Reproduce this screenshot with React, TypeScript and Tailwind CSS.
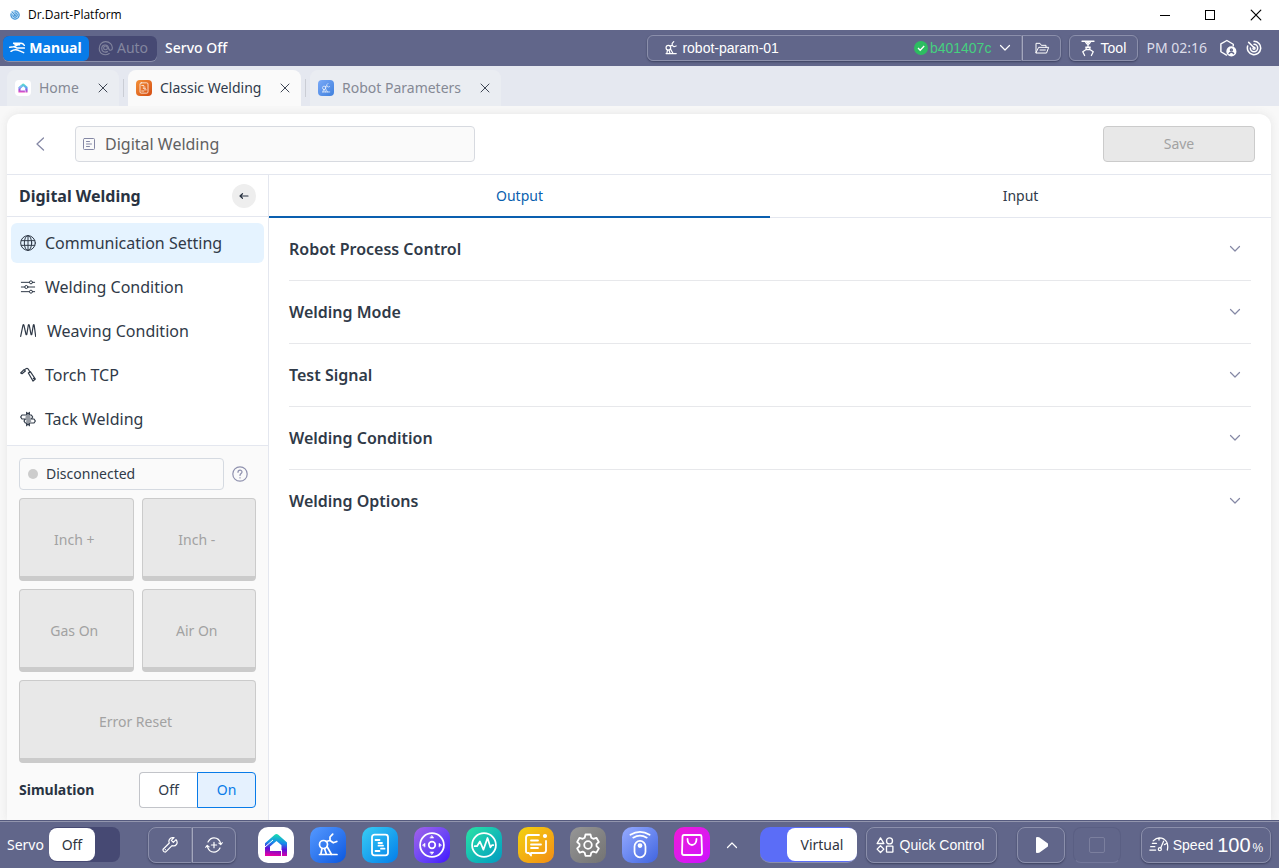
import { ReactNode, SVGProps, useState } from 'react';
import clsx from 'clsx';

type IconProps = SVGProps<SVGSVGElement>;

function Icon({ children, ...props }: IconProps) {
  return (
    <svg
      viewBox="0 0 24 24"
      fill="none"
      stroke="currentColor"
      strokeWidth={1.5}
      strokeLinecap="round"
      strokeLinejoin="round"
      aria-hidden="true"
      {...props}
    >
      {children}
    </svg>
  );
}

function RobotIcon(props: IconProps) {
  return (
    <Icon {...props}>
      <circle cx="7.500" cy="11.500" r="4" />
      <path d="M3.500 21.500h17.500M6 15.500l-1.200 6M11 13.500l4.500 8M8.500 15.500l2 6M10 8.500L14 7.500V4l2.700-2.800M14 7.500l3.300 2.300 3.500-1.300" />
    </Icon>
  );
}

function SpiralIcon(props: IconProps) {
  return (
    <Icon {...props}>
      <path d="M12 2a10 10 0 1 1-9.500 7M12 6.500a5.500 5.500 0 1 1-5.500 5.500M12 11a1.500 1.500 0 1 1-1.500 1.500M4 3.500l7 7" />
    </Icon>
  );
}

function HomeIcon({ id, ...props }: IconProps & { id: string }) {
  return (
    <svg viewBox="0 0 24 24" fill="none" aria-hidden="true" {...props}>
      <defs>
        <linearGradient id={id} x1="14" y1="1" x2="12" y2="23" gradientUnits="userSpaceOnUse">
          <stop stopColor="#19dfad" />
          <stop offset=".4" stopColor="#168ceb" />
          <stop offset=".68" stopColor="#5b12d8" />
          <stop offset="1" stopColor="#e500a5" />
        </linearGradient>
      </defs>
      <path fill={`url(#${id})`} d="M12.500 1q1 0 1.800.8L23 9.500V23h-5.500V12.200L12.500 8 6 13.500V18h11v5H1V10.200L10.700 1.800Q11.500 1 12.500 1z" />
      <path stroke="#fff" d="M1 14l8-7M17.500 17v6" />
    </svg>
  );
}

function DocIcon(props: IconProps) {
  return (
    <Icon {...props}>
      <rect x="4" y="1.700" width="16" height="20.600" rx="2.500" />
      <path d="M7.500 7h4M10.500 10h3.500M10.500 12.700h4.500M13 15.700h3.500M7.500 18h4" />
    </Icon>
  );
}

function CloseIcon(props: IconProps) {
  return (
    <Icon viewBox="0 0 10 10" strokeWidth={1} {...props}>
      <path d="M1 1l8 8M9 1L1 9" />
    </Icon>
  );
}

function Chevron(props: IconProps) {
  return (
    <Icon viewBox="0 0 12 12" strokeWidth={1.200} {...props}>
      <path d="M1.500 3.500L6 8l4.500-4.500" />
    </Icon>
  );
}

function TitleBar() {
  return (
    <div className="flex h-[30px] shrink-0 items-center bg-white pl-[10px] text-black">
      <SpiralIcon className="mr-2 size-[10px] rounded-full bg-[#c4e1f7] text-[#2d86cf]" strokeWidth={2.400} />
      <span className="font-['Open_Sans',sans-serif] text-xs">Dr.Dart-Platform</span>
      <div className="ml-auto flex h-full">
        <button aria-label="Minimize" className="flex w-11 items-center justify-center">
          <svg className="h-3 w-[10px]" viewBox="0 0 10 12" stroke="currentColor" shapeRendering="crispEdges"><path d="M0 6.500h10" /></svg>
        </button>
        <button aria-label="Maximize" className="flex w-[46px] items-center justify-center">
          <span className="size-[10px] border border-black" />
        </button>
        <button aria-label="Close" className="flex w-[46px] items-center justify-center">
          <CloseIcon className="size-3" />
        </button>
      </div>
    </div>
  );
}

const outlined = 'flex items-center border border-[#8b8fab] shadow-[0_1px_2px_#3c4060]';

function StatusBar() {
  return (
    <header className="flex h-9 shrink-0 items-center bg-[#61668a] pr-[17px] pl-[3px] text-white">
      <div className="flex h-[25px] items-center rounded-md bg-[#464973] text-sm shadow-[0_1px_0_#8b8fab]">
        <button className="flex h-full w-[86px] items-center justify-center gap-1 rounded-md bg-[#087be8] pr-px font-bold">
          <Icon className="size-4" strokeWidth={2.200}>
            <path d="M7 5h11q3 0 5 3M7 5l3 2h6M1 11l6-1 5 2h11M7 10l5-2M3 17q6-4 12-1l7 3" />
          </Icon>
          Manual
        </button>
        <button className="flex h-full w-[68px] items-center justify-center gap-1 text-[#83869f]">
          <Icon className="size-[15px]" strokeWidth={1.800}>
            <circle cx="12" cy="11" r="3" />
            <path d="M18 20c-8 5-16 0-16-8C2 5 7 1 12 1c7 0 11 5 11 10 0 5-5 5-6 1-1-8-11-7-11 0 0 5 5 7 9 5" />
          </Icon>
          Auto
        </button>
      </div>
      <span className="ml-2 text-sm font-medium">Servo Off</span>

      <div className="ml-auto flex h-[26px] w-[414px] rounded-md font-['Liberation_Sans',Arial,sans-serif] text-sm">
        <button className={clsx(outlined, 'flex-1 rounded-l-md pr-[10px] pl-4')}>
          <RobotIcon className="mr-1 size-[14px]" strokeWidth={2} />
          robot-param-01
          <svg className="ml-auto size-[14px]" viewBox="0 0 14 14" fill="none" aria-hidden="true">
            <circle cx="7" cy="7" r="7" fill="#2dbd61" />
            <path d="M4 7l2.200 2.200L10.200 5" stroke="#fff" strokeWidth="1.300" />
          </svg>
          <span className="mr-2 ml-[2px] text-[#45d07f]">b401407c</span>
          <Chevron className="size-3" />
        </button>
        <button aria-label="Open folder" className={clsx(outlined, 'w-[39px] justify-center rounded-r-md border-l-[#a3a6bd]')}>
          <Icon className="size-4">
            <path d="M3 19V5h6l2 3h7v3M3 19l4-8h15l-3 8zM9 15h8" />
          </Icon>
        </button>
      </div>
      <button className={clsx(outlined, "ml-2 h-[26px] w-[69px] justify-center gap-1 rounded-md pr-[3px] font-['Liberation_Sans',Arial,sans-serif] text-sm")}>
        <Icon className="size-[18px]" strokeWidth={1.700}>
          <path d="M4 3h16M8 3l2 3M16 3l-2 3M12 7v4M9 11h6M9.500 11v3L5 17l2.500 5M14.500 11v3l4.500 3-2.500 5M9.500 14h5" />
          <circle cx="12" cy="5.500" r="1.500" />
        </Icon>
        Tool
      </button>
      <span className="ml-2 text-sm text-[#dddde9]">PM 02:16</span>
      <Icon className="ml-3 size-[18px]" strokeWidth={1.900}>
        <path d="M10 21.500L2.500 17V6.500L10.500 2l8.500 5v2" />
        <circle cx="16.500" cy="16.500" r="5.800" fill="#fff" />
        <g stroke="#61668a"><circle cx="16.500" cy="14.500" r="1.300" /><path d="M13.500 19.500c1-2.500 5-2.500 6 0" /></g>
      </Icon>
      <SpiralIcon className="ml-[9px] size-4" strokeWidth={2.300} />
    </header>
  );
}

interface AppTabProps {
  label: string;
  icon: ReactNode;
  active?: boolean;
  className: string;
}

function AppTab({ label, icon, active, className }: AppTabProps) {
  return (
    <div
      className={clsx(
        'flex h-9 items-center rounded-t-lg pr-[11px] pl-2 text-sm',
        active ? 'bg-[#fafafa] text-[#303a4c]' : 'bg-[#eaedf2] text-[#858995]',
        className,
      )}
    >
      {icon}
      <button className="ml-2">{label}</button>
      <button aria-label={`Close ${label}`} className="ml-auto text-[#3f4654]"><CloseIcon className="size-[10px]" /></button>
    </div>
  );
}

function AppTabs() {
  return (
    <nav className="flex h-10 shrink-0 items-end bg-[#e5e8f0] pl-[7px]">
      <AppTab
        label="Home"
        className="w-28"
        icon={<span className="flex size-4 items-center justify-center rounded bg-white"><HomeIcon id="home-tab" className="size-[10px] opacity-70" /></span>}
      />
      <span className="mr-1 mb-[9px] ml-1 h-[18px] w-px bg-[#cacdd5]" />
      <AppTab
        label="Classic Welding"
        active
        className="w-[173px]"
        icon={<span className="flex size-4 items-center justify-center rounded bg-linear-to-br from-[#f49037] to-[#d34b12] text-white"><DocIcon className="size-3" /></span>}
      />
      <span className="mr-1 mb-[9px] ml-1 h-[18px] w-px bg-[#cacdd5]" />
      <AppTab
        label="Robot Parameters"
        className="w-[191px]"
        icon={<span className="flex size-4 items-center justify-center rounded bg-linear-to-br from-[#79a9f7] to-[#3f80dd] text-white"><RobotIcon className="size-[10px]" /></span>}
      />
    </nav>
  );
}

const menuItems = [
  {
    label: 'Communication Setting',
    icon: <><circle cx="12" cy="12" r="11" /><ellipse cx="12" cy="12" rx="5.500" ry="11" /><path d="M12 1v22M2 8.500h20M2 15.500h20" /></>,
  },
  {
    label: 'Welding Condition',
    icon: <><path d="M2 5h12M19 5h3M2 12h5M12 12h10M2 19h12M19 19h3" /><circle cx="16.500" cy="5" r="2.300" /><circle cx="9.500" cy="12" r="2.300" /><circle cx="16.500" cy="19" r="2.300" /></>,
  },
  {
    label: 'Weaving Condition',
    icon: <path strokeWidth="1.800" d="M1 20L4.500 3q.7-1 1.300 0L9 17q.6 1 1.200 0L12.500 3q.7-1 1.300 0L16.500 17q.6 1 1.200 0L20 3q.7-1 1.200 0L23.500 20" />,
  },
  {
    label: 'Torch TCP',
    icon: <path strokeWidth="1.800" d="M1 9l5-5 2 2-5 4zM7 4q4-4 6 0l2 4M12.500 9l3-2 7.500 11-3.500 3zM20 17l3 1" />,
  },
  {
    label: 'Tack Welding',
    icon: <path strokeWidth="1.800" d="M10 5V2M14 2v3M10 19v3M14 22v-3M10 3.500h4M10 20.500h4M3 6h14l2 3-2 3H3L1 9zM8 12h13l2 3-2 3H8l-2-3zM9 9h6M10 15h6" />,
  },
];

function WeldingMenu() {
  const [current, setCurrent] = useState('Communication Setting');

  return (
    <div className="border-b border-[#e4e7ef]">
      <div className="flex h-[42px] items-center justify-between border-b border-[#e4e7ef] pr-3 pl-3">
        <h2 className="text-base font-bold text-[#293342]">Digital Welding</h2>
        <button aria-label="Collapse menu" className="flex size-6 items-center justify-center rounded-full bg-[#eeeeee] text-[#293342]">
          <Icon viewBox="0 0 12 12" className="size-3" strokeWidth={1.200}><path d="M2 6h8M4.500 3.700L2 6l2.500 2.300" /></Icon>
        </button>
      </div>
      <div className="flex flex-col gap-1 px-1 pt-[6px] pb-[6px]">
        {menuItems.map((item) => (
          <button
            key={item.label}
            onClick={() => setCurrent(item.label)}
            className={clsx(
              'flex h-10 items-center rounded-md pl-[9px] text-base text-[#303a48]',
              current === item.label && 'bg-[#e5f3ff]',
              item.label === 'Weaving Condition' ? 'gap-[11px]' : 'gap-[9px]',
            )}
          >
            <Icon className="size-4">{item.icon}</Icon>
            {item.label}
          </button>
        ))}
      </div>
    </div>
  );
}

function SignalButton({ children, wide }: { children: ReactNode; wide?: boolean }) {
  return (
    <button
      disabled
      className={clsx(
        'h-[83px] rounded border border-b-[5px] border-[#cbcbcb] bg-[#e8e8e8] pt-1 pr-1 text-sm text-[#a2a2a2]',
        wide && 'col-span-2',
      )}
    >
      {children}
    </button>
  );
}

function ControlPanel() {
  const [simulation, setSimulation] = useState(true);

  return (
    <div className="flex-1 bg-[#fafafa] px-3 pt-3 pb-3">
      <div className="flex items-center gap-2">
        <div className="flex h-8 w-[205px] items-center gap-2 rounded border border-[#d5dae1] pl-2 text-sm text-[#303a48]">
          <span className="size-[10px] rounded-full bg-[#cccccc]" />
          Disconnected
        </div>
        <button aria-label="Help" className="text-[#8f91ae]">
          <Icon className="size-4" viewBox="0 0 16 16" strokeWidth={1.200}>
            <circle cx="8" cy="8" r="7.200" />
            <path d="M6 6.300C6 3.500 10 3.500 10 6c0 1.700-2 1.500-2 3.500M8 11.700v.2" />
          </Icon>
        </button>
      </div>
      <div className="mt-2 grid grid-cols-2 gap-2">
        <SignalButton>Inch +</SignalButton>
        <SignalButton>Inch -</SignalButton>
        <SignalButton>Gas On</SignalButton>
        <SignalButton>Air On</SignalButton>
        <SignalButton wide>Error Reset</SignalButton>
      </div>
      <div className="mt-[9px] flex items-center justify-between">
        <span className="text-sm font-bold text-[#293342]">Simulation</span>
        <div className="flex h-9 w-[117px] text-sm">
          <button
            onClick={() => setSimulation(false)}
            className={clsx('flex-1 rounded-l border', simulation ? 'border-r-0 border-[#c2c4c9] bg-white text-[#303a48]' : 'border-[#087be8] bg-[#e5f1fe] text-[#087be8]')}
          >
            Off
          </button>
          <button
            onClick={() => setSimulation(true)}
            className={clsx('flex-1 rounded-r border', simulation ? 'border-[#087be8] bg-[#e5f1fe] text-[#087be8]' : 'border-l-0 border-[#c2c4c9] bg-white text-[#303a48]')}
          >
            On
          </button>
        </div>
      </div>
    </div>
  );
}

const sections = ['Robot Process Control', 'Welding Mode', 'Test Signal', 'Welding Condition', 'Welding Options'];

function SignalSettings() {
  const [tab, setTab] = useState('Output');

  return (
    <section className="min-w-0 flex-1">
      <div className="flex h-[43px] text-sm">
        {['Output', 'Input'].map((name) => (
          <button
            key={name}
            onClick={() => setTab(name)}
            className={clsx(
              'flex-1',
              tab === name ? 'border-b-2 border-[#0a5faf] text-[#0a5faf]' : 'border-b border-[#e4e7ef] text-[#303a48]',
            )}
          >
            {name}
          </button>
        ))}
      </div>
      <div className="mr-5 ml-5">
        {sections.map((name) => (
          <button
            key={name}
            className="flex h-[63px] w-full items-center justify-between border-b border-[#e7e8eb] pr-[10px] text-base font-semibold text-[#303a48] last:border-transparent"
          >
            {name}
            <Chevron className="size-3 text-[#8588a5]" />
          </button>
        ))}
      </div>
    </section>
  );
}

const dockApps: { name: string; tile: string; icon: ReactNode }[] = [
  { name: 'Home', tile: 'bg-white', icon: <HomeIcon id="home-dock" className="size-6" /> },
  { name: 'Robot Parameters', tile: 'bg-linear-to-br from-[#5599ff] to-[#0757df]', icon: <RobotIcon className="size-6" strokeWidth={1.700} /> },
  { name: 'Task Editor', tile: 'bg-linear-to-br from-[#39cdf3] to-[#087ce9]', icon: <DocIcon className="size-6" strokeWidth={1.800} /> },
  {
    name: 'Jog',
    tile: 'bg-linear-to-br from-[#a361e8] to-[#4300ff]',
    icon: <Icon className="size-7"><circle cx="12" cy="12" r="10.200" /><circle cx="12" cy="12" r="2.800" /><path fill="currentColor" strokeWidth=".5" d="M12 4l1.500 2h-3zM12 20l1.500-2h-3zM4 12l2-1.500v3zM20 12l-2-1.500v3z" /></Icon>,
  },
  {
    name: 'Monitoring',
    tile: 'bg-linear-to-br from-[#2be2a3] to-[#079ac0]',
    icon: <Icon className="size-7"><circle cx="12" cy="12" r="10.200" /><path d="M4 13h2l2.500-4 3 7 3.500-10 2.500 8 1.500-2h1" /></Icon>,
  },
  {
    name: 'Log',
    tile: 'bg-linear-to-br from-[#f2d20d] to-[#f18c15]',
    icon: <Icon className="size-6" strokeWidth={1.800}><path d="M15 2H4.500Q2 2 2 4.500v14Q2 20 4 20h1l2 2.500V20h12q3 0 3-2.500V8M7 7.500h7M7 11.500h10M7 15h7" /><circle cx="21" cy="3" r="1.200" fill="currentColor" /></Icon>,
  },
  {
    name: 'Settings',
    tile: 'bg-linear-to-br from-[#969696] to-[#737373]',
    icon: <Icon className="size-6" strokeWidth={1.800}><circle cx="12" cy="12" r="3.800" /><path d="M9.500 1.500h5l.8 3.200 2 1.100 3.100-1 2.400 4.200-2.300 2.200v2l2.300 2.300-2.400 4.100-3.100-1-2 1.200-.8 3h-5l-.8-3-2-1.200-3.100 1-2.400-4.100 2.300-2.300v-2L1.200 9l2.400-4.200 3.100 1 2-1.100z" /></Icon>,
  },
  {
    name: 'Remote',
    tile: 'bg-linear-to-br from-[#96aaff] to-[#4164df]',
    icon: <Icon className="size-7"><rect x="7.300" y="8.500" width="9.400" height="14" rx="4.700" /><circle cx="12" cy="12.500" r="1.300" fill="currentColor" /><path d="M6.200 5.700q5.800-3.400 11.600 0M3.800 3.300q8.200-5 16.400 0" /></Icon>,
  },
  {
    name: 'Store',
    tile: 'bg-linear-to-br from-[#ef18d7] to-[#cd0cff]',
    icon: <Icon className="size-6" strokeWidth={1.800}><path d="M4 2h16q1.500 0 1.500 1.500L22 20q0 2-2 2H4q-2 0-2-2l.5-16.500Q2.500 2 4 2zM7.500 6c0 8 9 8 9 0" /></Icon>,
  },
];

function BottomBar() {
  return (
    <footer className="flex h-12 shrink-0 items-center border-t border-[#555a7e] bg-[#61668a] pr-2 pl-[7px] text-sm text-white shadow-[inset_0_1px_0_#9295ad]">
      <span>Servo</span>
      <button className="ml-[5px] h-[35px] w-[71px] rounded-lg bg-[#464973] text-[#303540]">
        <span className="flex h-[33px] w-[46px] items-center justify-center rounded-lg bg-white">Off</span>
      </button>
      <button aria-label="Tools" className={clsx(outlined, 'ml-7 h-9 w-[44px] justify-center rounded-l-lg')}>
        <Icon className="size-4" strokeWidth={1.800}><path d="M21 4l-4 4-3-3 4-4c-6-1-9 4-7 8L2 18c-2 2 2 6 4 4l9-9c6 2 10-4 6-9zM5 19h.1" /></Icon>
      </button>
      <button aria-label="Recover" className={clsx(outlined, 'h-9 w-[44px] justify-center rounded-r-lg border-l-[#a3a6bd]')}>
        <Icon className="size-[18px]" strokeWidth={1.600}><path d="M12 8.500v7M8.500 12h7M4 8q3-5.500 8-5.500 7 0 9 8M20 16q-3 5.500-8 5.500-7 0-9-8M18.500 9.500l2.500 2 2-2.500M5.500 14.500L3 12.500l-2 2.500" /></Icon>
      </button>

      <div className="ml-[22px] flex gap-4">
        {dockApps.map((app) => (
          <button key={app.name} aria-label={app.name} className={clsx('flex size-9 items-center justify-center rounded-[10px] text-white', app.tile)}>
            {app.icon}
          </button>
        ))}
      </div>
      <button aria-label="More apps" className="ml-4"><Chevron className="size-3 rotate-180" /></button>

      <button className="ml-auto flex h-9 w-[97px] items-center justify-end rounded-[10px] border-b border-[#8b8fab] bg-[#5b6df7] text-[#303540]">
        <span className="flex h-[33px] w-[70px] items-center justify-center rounded-lg bg-white pt-px">Virtual</span>
      </button>
      <button className={clsx(outlined, "ml-[9px] h-9 w-[131px] justify-center gap-[6px] rounded-lg pr-[3px] font-['Liberation_Sans',Arial,sans-serif]")}>
        <Icon className="size-[18px]" strokeWidth={1.800}><path d="M6 2.500L10.500 10h-9zM6 13l4.500 4.500L6 22l-4.500-4.500z" /><circle cx="18" cy="6.500" r="4" /><rect x="14" y="13.500" width="8.500" height="8" rx=".5" /></Icon>
        Quick Control
      </button>
      <button aria-label="Play" className={clsx(outlined, 'ml-5 h-9 w-12 justify-center rounded-lg')}>
        <Icon className="ml-[2px] h-4 w-3" viewBox="0 0 12 16" fill="currentColor" strokeWidth={2}><path d="M1 1l2 .3L11 7v2l-8 5.700L1 15z" /></Icon>
      </button>
      <button aria-label="Stop" disabled className="ml-2 flex h-9 w-12 items-center justify-center rounded-lg border border-[#5a5f83] border-b-[#73779a]">
        <span className="size-4 rounded-xs border border-[#7b7f9e]" />
      </button>
      <button className={clsx(outlined, "ml-5 h-9 w-[130px] justify-center rounded-lg font-['Liberation_Sans',Arial,sans-serif]")}>
        <Icon className="mr-1 size-5"><path d="M4 10h5M2 14h5M1 18h7M5 7q6-6 13-2 6 4 4 13M17.500 7.500L14 15.500M12 3.500v2.500M20.500 10.500l-2 1" /><circle cx="13" cy="17" r="1.800" /></Icon>
        Speed
        <span className="ml-1 text-xl">100</span>
        <span className="mt-[6px] ml-[2px] text-xs">%</span>
      </button>
    </footer>
  );
}

export default function App() {
  return (
    <div className="flex min-h-screen flex-col bg-[#f8f8f8] font-['Noto_Sans',sans-serif]">
      <TitleBar />
      <StatusBar />
      <AppTabs />
      <main className="mt-2 flex flex-1 flex-col pr-2 pl-[7px]">
        <div className="flex flex-1 flex-col overflow-hidden rounded-t-xl bg-white shadow-[0_0_8px_#e5e5e5]">
          <div className="flex h-[61px] shrink-0 items-center border-b border-[#e4e7ef] pr-4">
            <button aria-label="Back" className="ml-[25px] text-[#8588a5]">
              <Icon className="size-4" viewBox="0 0 16 16" strokeWidth={1.300}><path d="M11.500 2L5 8l6.500 6" /></Icon>
            </button>
            <label className="ml-[27px] flex h-9 w-[400px] items-center rounded border border-[#d7dae0] bg-[#fafafa] pl-[6px]">
              <Icon viewBox="0 0 14 14" className="size-[14px] text-[#8588a5]" strokeWidth={1}>
                <rect x="1.500" y="1.500" width="11" height="11" rx="1" />
                <path d="M4.500 4.500h3M4.500 7h5M4.500 9.500h3" />
              </Icon>
              <input
                aria-label="Program name"
                defaultValue="Digital Welding"
                readOnly
                className="ml-[9px] min-w-0 flex-1 bg-transparent text-base text-[#616161] outline-none"
              />
            </label>
            <button disabled className="ml-auto h-9 w-38 rounded border border-[#cbcbcb] bg-[#e8e8e8] text-sm text-[#a2a2a2]">Save</button>
          </div>
          <div className="flex flex-1">
            <aside className="flex w-[262px] shrink-0 flex-col border-r border-[#e4e7ef]">
              <WeldingMenu />
              <ControlPanel />
            </aside>
            <SignalSettings />
          </div>
        </div>
      </main>
      <BottomBar />
    </div>
  );
}
